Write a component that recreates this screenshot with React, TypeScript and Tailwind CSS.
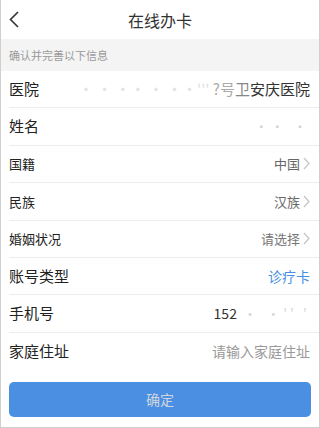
import React from "react";

function Chevron() {
  return (
    <svg width="7" height="13" viewBox="0 0 7 13" fill="none" stroke="#c4c4c4" strokeWidth="1.2" className="ml-[3px]">
      <path d="M1 1l5 5.5L1 12" />
    </svg>
  );
}

type Row = {
  label: string;
  big: boolean;
  value: React.ReactNode;
  chevron?: boolean;
};

const rows: Row[] = [
  {
    label: "医院",
    big: true,
    value: (
      <span className="text-[15px]">
        <span className="text-[#e2e2e2]">&#183;  &#8226;  ·· ·  ··''' </span>
        <span className="text-[#aaa]">?号</span>
        <span className="text-[#888]">卫</span>
        <span className="text-[#333]">安庆医院</span>
      </span>
    ),
  },
  {
    label: "姓名",
    big: true,
    value: <span className="text-[12px] tracking-[4px] text-[#cfcfcf]">·· ·</span>,
  },
  { label: "国籍", big: false, value: <span className="text-[13px] text-[#666]">中国</span>, chevron: true },
  { label: "民族", big: false, value: <span className="text-[13px] text-[#666]">汉族</span>, chevron: true },
  { label: "婚姻状况", big: false, value: <span className="text-[13px] text-[#777]">请选择</span>, chevron: true },
  { label: "账号类型", big: true, value: <span className="text-[14px] text-[#4a90e2]">诊疗卡</span> },
  {
    label: "手机号",
    big: true,
    value: (
      <span className="text-[14px]">
        <span className="text-[#333]">152</span>
        <span className="text-[#d8d8d8] tracking-[3px]">      · ·'' '</span>
      </span>
    ),
  },
];

export default function App() {
  return (
    <div
      className="w-[320px] h-[428px] bg-white border-x border-b border-[#cfcfcf] flex flex-col overflow-hidden"
      style={{ fontFamily: '"Noto Sans CJK SC", "Noto Sans", sans-serif' }}
    >
      <div className="h-[39px] relative flex items-center justify-center shrink-0">
        <svg width="10" height="17" viewBox="0 0 10 17" fill="none" stroke="#333" strokeWidth="1.6" className="absolute left-[8px] top-[11px]">
          <path d="M9 1L1.5 8.5 9 16" />
        </svg>
        <span className="text-[16px] text-[#333]">在线办卡</span>
      </div>
      <div className="h-[32px] bg-[#f4f4f4] flex items-center px-[8px] shrink-0">
        <span className="text-[11px] text-[#9a9a9a]">确认并完善以下信息</span>
      </div>
      <div className="pl-[8px]">
        {rows.map((r) => (
          <div key={r.label} className="h-[37.4px] box-border border-b border-[#ececec] flex items-center pr-[9px]">
            <span className={r.big ? "text-[15px] text-[#222]" : "text-[13px] text-[#222]"}>{r.label}</span>
            <div className="ml-auto flex items-center">
              {r.value}
              {r.chevron && <Chevron />}
            </div>
          </div>
        ))}
        <div className="h-[38px] flex items-center pr-[9px]">
          <span className="text-[15px] text-[#222]">家庭住址</span>
          <span className="ml-auto text-[14px] text-[#999]">请输入家庭住址</span>
        </div>
      </div>
      <div className="px-[8px] mt-[11px]">
        <button className="w-full h-[35px] rounded-[5px] bg-[#4a8fe2] text-[14px] text-[#d0d6de] flex items-center justify-center">
          确定
        </button>
      </div>
    </div>
  );
}
